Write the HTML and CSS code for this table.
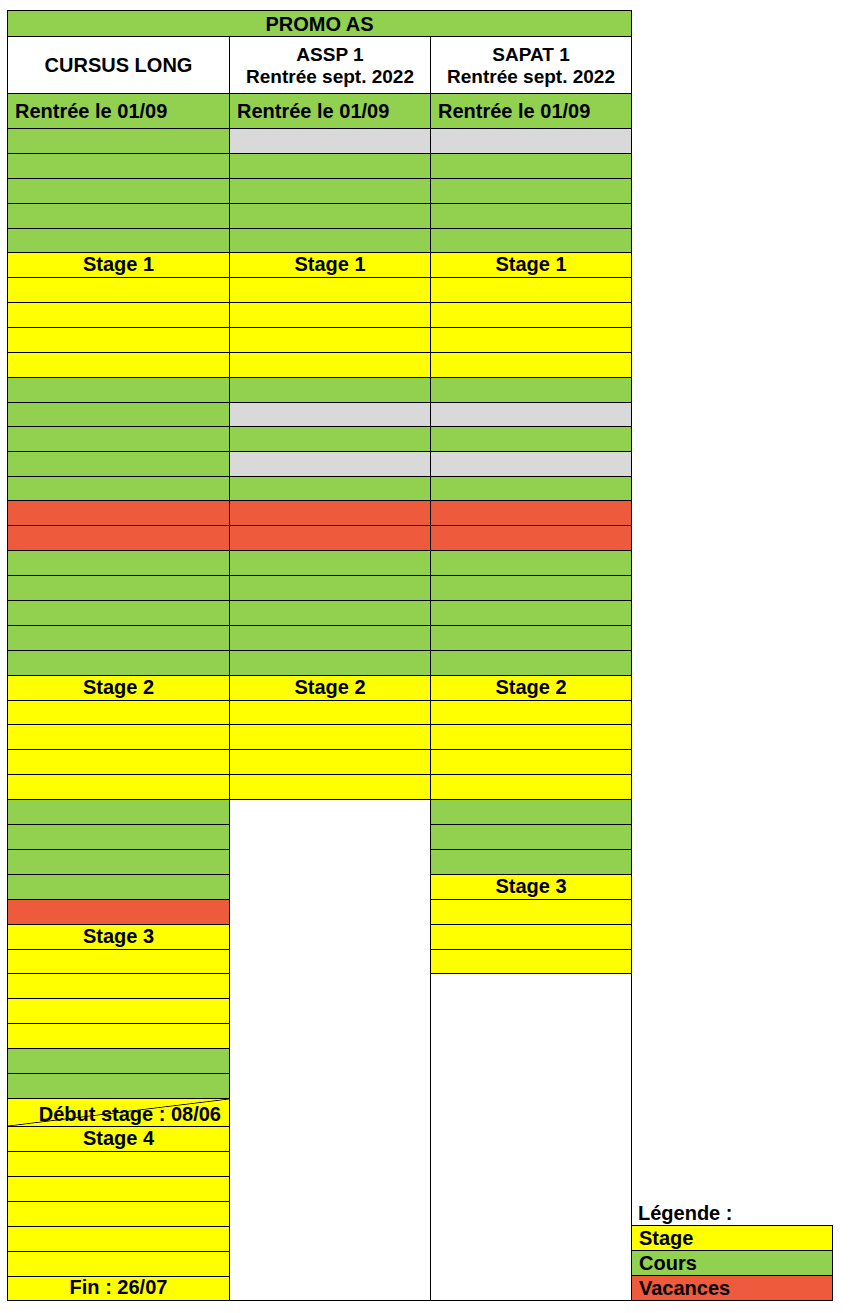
FILE: index.html
```html
<!DOCTYPE html>
<html lang="fr">
<head>
<meta charset="utf-8">
<title>Promo AS</title>
<link rel="stylesheet" href="styles.css">
</head>
<body>
<div class="page">
  <div class="planning">
    <div class="c g title">PROMO AS</div>
    <div class="c w head">CURSUS LONG</div>
    <div class="c w head two">ASSP 1<br>Rentrée sept. 2022</div>
    <div class="c w head two">SAPAT 1<br>Rentrée sept. 2022</div>
    <div class="c g left">Rentrée le 01/09</div>
    <div class="c g left">Rentrée le 01/09</div>
    <div class="c g left">Rentrée le 01/09</div>
    <!-- r1 -->
    <div class="c g"></div><div class="c k"></div><div class="c k"></div>
    <!-- r2-5 -->
    <div class="c g"></div><div class="c g"></div><div class="c g"></div>
    <div class="c g"></div><div class="c g"></div><div class="c g"></div>
    <div class="c g"></div><div class="c g"></div><div class="c g"></div>
    <div class="c g"></div><div class="c g"></div><div class="c g"></div>
    <!-- r6 -->
    <div class="c y mid">Stage 1</div><div class="c y mid">Stage 1</div><div class="c y mid">Stage 1</div>
    <!-- r7-10 -->
    <div class="c y"></div><div class="c y"></div><div class="c y"></div>
    <div class="c y"></div><div class="c y"></div><div class="c y"></div>
    <div class="c y"></div><div class="c y"></div><div class="c y"></div>
    <div class="c y"></div><div class="c y"></div><div class="c y"></div>
    <!-- r11-15 -->
    <div class="c g"></div><div class="c g"></div><div class="c g"></div>
    <div class="c g"></div><div class="c k"></div><div class="c k"></div>
    <div class="c g"></div><div class="c g"></div><div class="c g"></div>
    <div class="c g"></div><div class="c k"></div><div class="c k"></div>
    <div class="c g"></div><div class="c g"></div><div class="c g"></div>
    <!-- r16-17 -->
    <div class="c r"></div><div class="c r"></div><div class="c r"></div>
    <div class="c r"></div><div class="c r"></div><div class="c r"></div>
    <!-- r18-22 -->
    <div class="c g"></div><div class="c g"></div><div class="c g"></div>
    <div class="c g"></div><div class="c g"></div><div class="c g"></div>
    <div class="c g"></div><div class="c g"></div><div class="c g"></div>
    <div class="c g"></div><div class="c g"></div><div class="c g"></div>
    <div class="c g"></div><div class="c g"></div><div class="c g"></div>
    <!-- r23 -->
    <div class="c y mid">Stage 2</div><div class="c y mid">Stage 2</div><div class="c y mid">Stage 2</div>
    <!-- r24-27 -->
    <div class="c y"></div><div class="c y"></div><div class="c y"></div>
    <div class="c y"></div><div class="c y"></div><div class="c y"></div>
    <div class="c y"></div><div class="c y"></div><div class="c y"></div>
    <div class="c y"></div><div class="c y"></div><div class="c y"></div>
    <!-- r28 -->
    <div class="c g"></div><div class="c w span20"></div><div class="c g"></div>
    <!-- r29-30 -->
    <div class="c g"></div><div class="c g"></div>
    <div class="c g"></div><div class="c g"></div>
    <!-- r31 -->
    <div class="c g"></div><div class="c y mid">Stage 3</div>
    <!-- r32 -->
    <div class="c r"></div><div class="c y"></div>
    <!-- r33 -->
    <div class="c y mid">Stage 3</div><div class="c y"></div>
    <!-- r34 -->
    <div class="c y"></div><div class="c y"></div>
    <!-- r35 -->
    <div class="c y"></div><div class="c w span13"></div>
    <!-- r36-39 -->
    <div class="c y"></div>
    <div class="c y"></div>
    <div class="c g"></div>
    <div class="c g"></div>
    <!-- r40 -->
    <div class="c y debut">Début stage : 08/06</div>
    <!-- r41-47 -->
    <div class="c y mid">Stage 4</div>
    <div class="c y"></div>
    <div class="c y"></div>
    <div class="c y"></div>
    <div class="c y"></div>
    <div class="c y"></div>
    <div class="c y mid">Fin : 26/07</div>
  </div>
  <div class="legend">
    <div class="legend-title">Légende :</div>
    <div class="legend-grid">
      <div class="c y left">Stage</div>
      <div class="c g left">Cours</div>
      <div class="c r left">Vacances</div>
    </div>
  </div>
</div>
</body>
</html>
```

FILE: styles.css
```css
html, body {
  margin: 0;
  padding: 0;
  background: #ffffff;
}

body {
  font-family: "Liberation Sans", Arial, sans-serif;
  font-weight: bold;
  color: #000000;
}

.page {
  display: flex;
  align-items: flex-end;
  padding: 10px 0 0 7px;
}

.planning {
  display: grid;
  background: #000000;
  padding: 1px;
  gap: 1px;
  grid-template-columns: 221px 200px 200px;
  grid-template-rows:
    25px 56px 34px
    repeat(4, 24px) 23px
    repeat(6, 24px) 23px
    repeat(2, 24px) 23px
    repeat(8, 24px) 23px
    repeat(9, 24px) 23px
    repeat(5, 24px) 27px
    repeat(6, 24px) 23px;
}

.c {
  display: flex;
  align-items: center;
  font-size: 20px;
  line-height: 22px;
  white-space: nowrap;
  overflow: hidden;
}

.g { background: #92d050; }
.y { background: #ffff00; }
.r { background: #ee5a3c; }
.k { background: #d9d9d9; }
.w { background: #ffffff; }

.title {
  grid-column: 1 / span 3;
  justify-content: center;
  font-size: 20px;
}

.head {
  justify-content: center;
  text-align: center;
  font-size: 20px;
}

.head.two {
  font-size: 19px;
  line-height: 22px;
  padding-top: 1px;
}

.left {
  padding-left: 7px;
  font-size: 20px;
}

.mid {
  justify-content: center;
  padding-bottom: 3px;
}

.span20 { grid-row: span 20; }
.span13 { grid-row: span 13; }

.debut {
  justify-content: flex-end;
  align-items: flex-end;
  padding-right: 8px;
  padding-bottom: 1px;
  background:
    linear-gradient(to bottom right,
      rgba(0,0,0,0) calc(50% - 0.8px),
      #000000 50%,
      rgba(0,0,0,0) calc(50% + 0.8px)),
    #ffff00;
}

.legend {
  margin-left: -1px;
  width: 202px;
}

.legend-title {
  font-size: 20px;
  line-height: 23px;
  padding-left: 7px;
}

.legend-grid {
  display: grid;
  background: #000000;
  padding: 1px;
  gap: 1px;
  grid-template-rows: repeat(3, 24px);
}

.legend-grid .left {
  padding-left: 7px;
  font-size: 20px;
}
```
